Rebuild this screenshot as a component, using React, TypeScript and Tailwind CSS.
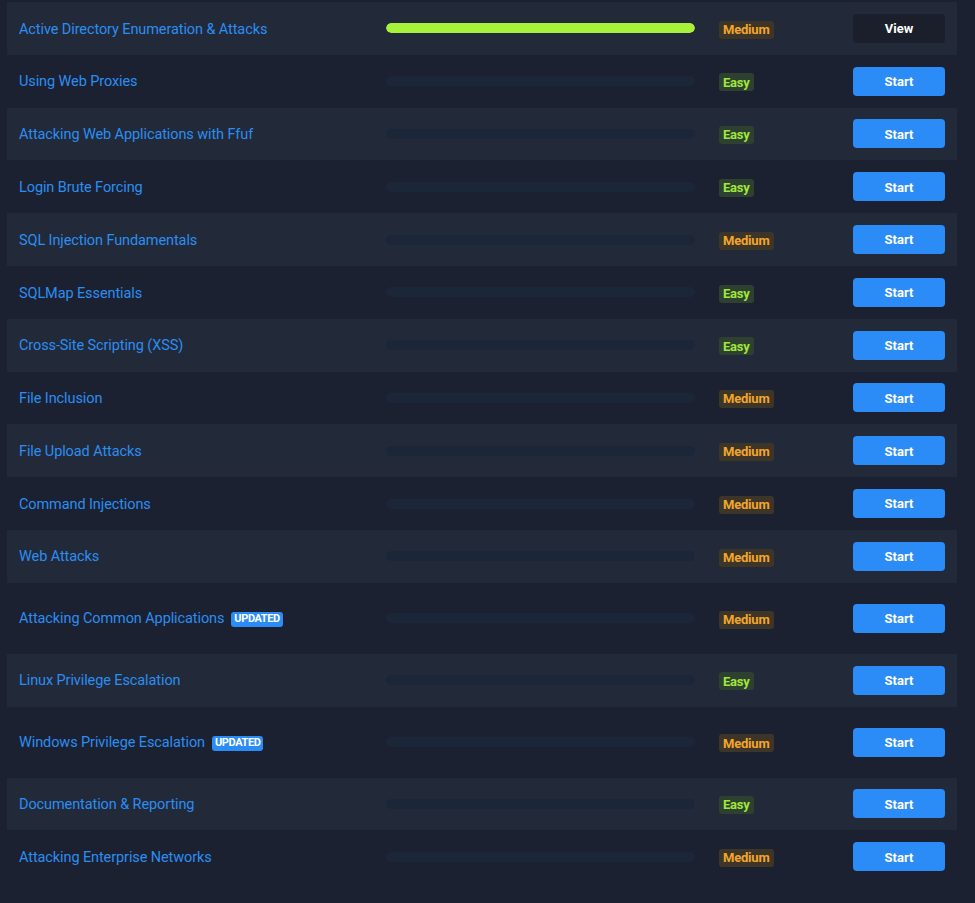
import React from "react";

type Mod = {
  title: string;
  level: "Easy" | "Medium";
  progress: number;
  updated?: boolean;
};

const MODULES: Mod[] = [
  { title: "Active Directory Enumeration & Attacks", level: "Medium", progress: 100 },
  { title: "Using Web Proxies", level: "Easy", progress: 0 },
  { title: "Attacking Web Applications with Ffuf", level: "Easy", progress: 0 },
  { title: "Login Brute Forcing", level: "Easy", progress: 0 },
  { title: "SQL Injection Fundamentals", level: "Medium", progress: 0 },
  { title: "SQLMap Essentials", level: "Easy", progress: 0 },
  { title: "Cross-Site Scripting (XSS)", level: "Easy", progress: 0 },
  { title: "File Inclusion", level: "Medium", progress: 0 },
  { title: "File Upload Attacks", level: "Medium", progress: 0 },
  { title: "Command Injections", level: "Medium", progress: 0 },
  { title: "Web Attacks", level: "Medium", progress: 0 },
  { title: "Attacking Common Applications", level: "Medium", progress: 0, updated: true },
  { title: "Linux Privilege Escalation", level: "Easy", progress: 0 },
  { title: "Windows Privilege Escalation", level: "Medium", progress: 0, updated: true },
  { title: "Documentation & Reporting", level: "Easy", progress: 0 },
  { title: "Attacking Enterprise Networks", level: "Medium", progress: 0 },
];

function Badge({ level }: { level: Mod["level"] }) {
  if (level === "Easy") {
    return (
      <span className="inline-flex h-[18px] items-center rounded-[3px] bg-[#2e402f] px-[4px] text-[13px] font-bold tracking-[-0.2px] text-[#9fe83c]">
        Easy
      </span>
    );
  }
  return (
    <span className="inline-flex h-[18px] items-center rounded-[3px] bg-[#3d3628] px-[4px] text-[13px] font-bold tracking-[-0.2px] text-[#f4a62a]">
      Medium
    </span>
  );
}

export default function App() {
  return (
    <div className="min-h-[903px] w-full bg-[#1b2130] pt-[2px] font-['Roboto',sans-serif]">
      <div className="ml-[7px] w-[950px]">
        {MODULES.map((m, idx) => (
          <div
            key={idx}
            className={`grid grid-cols-[367px_309px_24px_134px_92px] items-center px-3 ${
              m.updated ? "h-[71px]" : "h-[52.8px]"
            } ${idx % 2 === 0 ? "bg-[#222939]" : "bg-transparent"}`}
          >
            <div className="flex items-center gap-[7px] pt-[2px]">
              <span className="text-[14.5px] tracking-[-0.1px] text-[#2b8ef2]">{m.title}</span>
              {m.updated && (
                <span className="inline-flex h-[15px] items-center rounded-[3px] bg-[#2b8cf5] px-[3px] text-[11px] font-bold tracking-[-0.4px] text-white">
                  UPDATED
                </span>
              )}
            </div>
            <div className="h-[10px] w-full overflow-hidden rounded-full bg-[#1b2739]">
              <div
                className="h-full rounded-full bg-[#a6f23a]"
                style={{ width: `${m.progress}%` }}
              />
            </div>
            <div />
            <div className="pt-[1px]">
              <Badge level={m.level} />
            </div>
            {m.progress === 100 ? (
              <button className="h-[29px] w-[92px] rounded-[4px] bg-[#1a1f2b] pt-[1px] text-[13px] font-bold text-white">
                View
              </button>
            ) : (
              <button className="h-[29px] w-[92px] rounded-[4px] bg-[#2b8cf7] pt-[1px] text-[13px] font-bold text-white">
                Start
              </button>
            )}
          </div>
        ))}
      </div>
    </div>
  );
}
